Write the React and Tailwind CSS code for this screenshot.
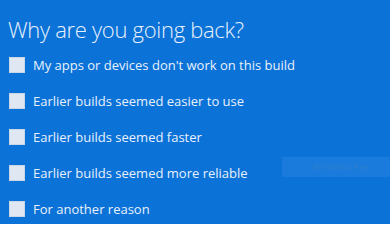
import React from "react";

const reasons = [
  "My apps or devices don't work on this build",
  "Earlier builds seemed easier to use",
  "Earlier builds seemed faster",
  "Earlier builds seemed more reliable",
  "For another reason",
];

const App = () => {
  return (
    <div
      className="relative w-[390px] h-[224px] overflow-hidden bg-[#0b72d8] text-[#e9f1fb]"
      style={{ fontFamily: '"Open Sans", "Noto Sans", sans-serif' }}
    >
      {/* Heading */}
      <h1 className="pl-[8px] pt-[14px] text-[22px] leading-[30px] font-light tracking-[-0.3px]">
        Why are you going back?
      </h1>

      {/* Reasons */}
      <ul className="mt-[13px] pl-[9px] flex flex-col gap-[20px]">
        {reasons.map((r) => (
          <li key={r} className="flex items-center gap-[8px] h-[16px]">
            <span className="w-[16px] h-[16px] bg-[#dfe7f2] border border-[#c9d6e6]" />
            <span className="text-[13px] leading-[16px]">{r}</span>
          </li>
        ))}
      </ul>

      {/* Disabled button */}
      <div className="absolute left-[282px] top-[157px] w-[118px] h-[20px] bg-[#1a7bdc] flex items-center justify-center">
        <span className="text-[9px] text-[#2d7fcf]">Windows Key</span>
      </div>
    </div>
  );
};

export default App;
